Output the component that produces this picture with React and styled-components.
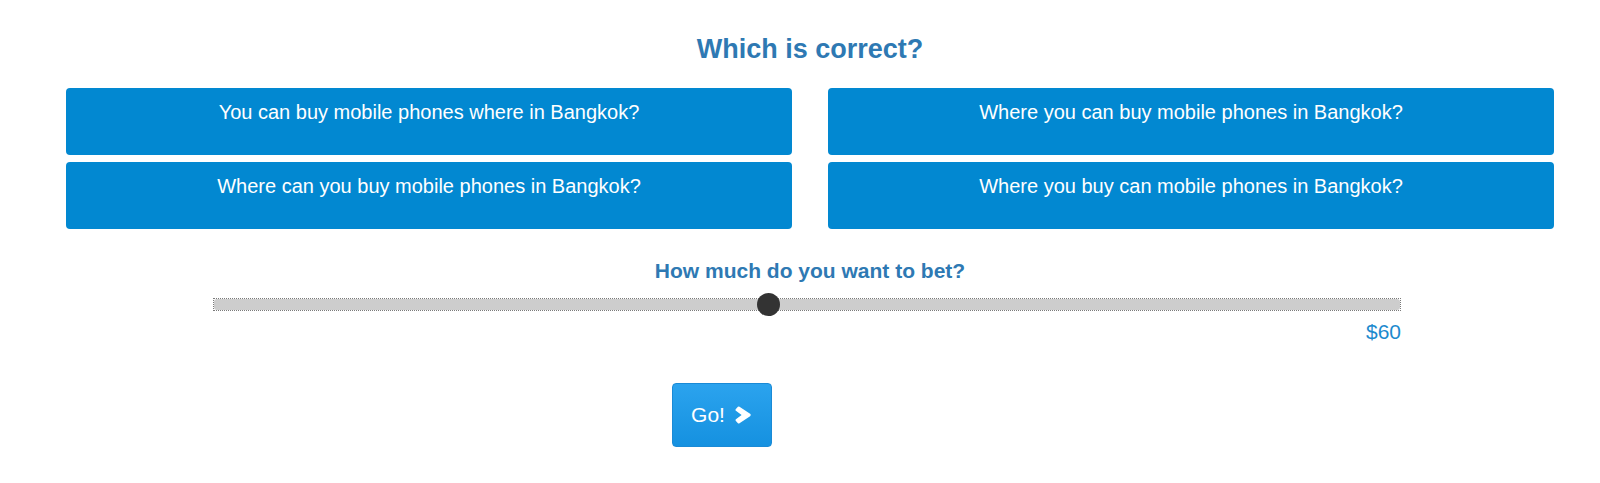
import React from "react";
import styled, { createGlobalStyle } from "styled-components";

const GlobalStyle = createGlobalStyle`
  body {
    margin: 0;
    background: #ffffff;
    font-family: "Liberation Sans", Arial, sans-serif;
  }
`;

const options = [
  "You can buy mobile phones where in Bangkok?",
  "Where you can buy mobile phones in Bangkok?",
  "Where can you buy mobile phones in Bangkok?",
  "Where you buy can mobile phones in Bangkok?",
];

const bet = { min: 10, max: 117, value: 60 };

export default function App() {
  const pct = (bet.value - bet.min) / (bet.max - bet.min);

  return (
    <Page>
      <GlobalStyle />
      <Title>Which is correct?</Title>
      <OptionGrid>
        {options.map((text) => (
          <OptionButton key={text}>{text}</OptionButton>
        ))}
      </OptionGrid>

      <BetLabel>How much do you want to bet?</BetLabel>
      <SliderBlock>
        <SliderRow>
          <SliderTrack>
            <SliderFill />
          </SliderTrack>
          <SliderThumb style={{ left: `calc(${pct * 100}% - ${pct * 23}px)` }} />
        </SliderRow>
        <Amount>${bet.value}</Amount>
      </SliderBlock>

      <GoButton>
        Go!
        <svg width="16" height="18" viewBox="0 0 15 17">
          <path d="M4.2 0.6 L14.2 7.4 Q15.4 8.5 14.2 9.6 L4.2 16.4 Q3.4 16.9 2.7 16.2 L0.6 13.9 Q0.1 13.2 0.8 12.6 L6.2 8.5 L0.8 4.4 Q0.1 3.8 0.6 3.1 L2.7 0.8 Q3.4 0.1 4.2 0.6 Z" fill="#ffffff" />
        </svg>
      </GoButton>
    </Page>
  );
}

const Page = styled.div`
  padding: 34px 46px 40px 66px;
`;

const Title = styled.h2`
  margin: 0;
  font-size: 27px;
  line-height: 31px;
  font-weight: bold;
  color: #2e79b3;
  text-align: center;
`;

const OptionGrid = styled.div`
  margin-top: 23px;
  display: grid;
  grid-template-columns: 1fr 1fr;
  column-gap: 36px;
  row-gap: 7px;
`;

const OptionButton = styled.div`
  height: 67px;
  box-sizing: border-box;
  padding-top: 13px;
  background: #0288d1;
  border-radius: 4px;
  color: #ffffff;
  font-size: 20px;
  line-height: 23px;
  text-align: center;
`;

const BetLabel = styled.div`
  margin-top: 30px;
  font-size: 21px;
  line-height: 24px;
  font-weight: bold;
  color: #2e79b3;
  text-align: center;
`;

const SliderBlock = styled.div`
  margin: 10px 153px 0 147px;
`;

const SliderRow = styled.div`
  position: relative;
  height: 23px;
  display: flex;
  align-items: center;
`;

const SliderTrack = styled.div`
  flex: 1;
  height: 13px;
  box-sizing: border-box;
  border: 1px dotted #7a7a7a;
  display: flex;
`;

const SliderFill = styled.div`
  flex: 1;
  background: #cdcdcd;
  border-radius: 3px;
`;

const SliderThumb = styled.div`
  position: absolute;
  top: 0;
  width: 23px;
  height: 23px;
  border-radius: 50%;
  background: #333333;
`;

const Amount = styled.div`
  margin-top: 4px;
  font-size: 21px;
  line-height: 24px;
  color: #1d8ace;
  text-align: right;
`;

const GoButton = styled.button`
  margin: 39px 0 0 606px;
  width: 100px;
  height: 64px;
  box-sizing: border-box;
  display: flex;
  align-items: center;
  justify-content: center;
  gap: 10px;
  padding: 0 2px 0 0;
  border: 1px solid #1a8ad6;
  border-radius: 4px;
  background: linear-gradient(#2ba3ee, #1591e0);
  color: #ffffff;
  font-family: "Liberation Sans", Arial, sans-serif;
  font-size: 21px;
`;
